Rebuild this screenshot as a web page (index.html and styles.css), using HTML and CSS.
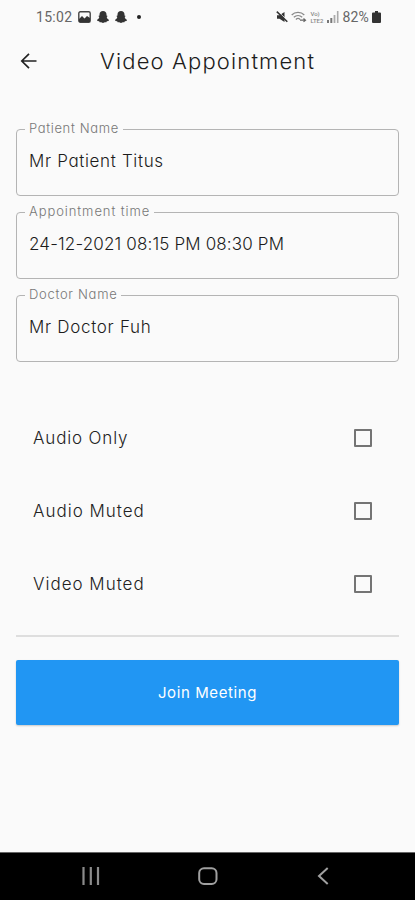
FILE: index.html
```html
<!DOCTYPE html>
<html lang="en">
<head>
<meta charset="utf-8">
<meta name="viewport" content="width=device-width, initial-scale=1">
<title>Video Appointment</title>
<link rel="stylesheet" href="styles.css">
</head>
<body>
<div class="screen">
  <div class="status">
    <div class="status-left">
      <span class="clock">15:02</span>
      <svg class="i-photo" width="13" height="12" viewBox="0 0 13 12"><rect x=".8" y=".8" width="11.4" height="10.4" rx="1.5" fill="#fafafa" stroke="#444" stroke-width="1.4"/><path d="M1 10V8l3-3 2.500 2.500L9 5l3 2v4H1z" fill="#333"/></svg>
      <svg width="12" height="12" viewBox="0 0 12 12"><path id="ghost" d="M6 0C3.800 0 2.500 1.500 2.500 3.400v1.200L1.300 5l1 1.100C2 7.500 1.200 8.300 0 8.900l.5 1.100 1.700.2.400 1h1.600L6 12l1.800-.8h1.600l.4-1 1.700-.2.500-1.100c-1.200-.6-2-1.400-2.300-2.800l1-1.100-1.200-.4V3.400C9.500 1.500 8.200 0 6 0z" fill="#333"/></svg>
      <svg width="12" height="12" viewBox="0 0 12 12"><use href="#ghost"/></svg>
      <span class="dot"></span>
    </div>
    <div class="status-right">
      <svg width="12" height="12" viewBox="0 0 12 12"><path d="M1 4.200h2.500L8.500 1v10L3.500 7.800H1z" fill="#333"/><path d="M1.500 0l10 9.500" stroke="#fafafa" stroke-width="1"/><path d="M.8.600l10.500 10.200" stroke="#333" stroke-width="1.500"/></svg>
      <svg width="16" height="12" viewBox="0 0 16 12" fill="none" stroke="#888" stroke-width="1.200"><path d="M.7 4C4 .5 10 .5 13.300 4M2.800 6.300c2.500-2.300 6-2.300 8.400 0M4.900 8.500c1.300-1.200 3-1.200 4.200 0"/><path d="M9 9.200h5M12.500 7.500l2 1.700-2 1.700" stroke="#666"/></svg>
      <span class="volte"><span>Vo)</span><span>LTE2</span></span>
      <svg width="12" height="12" viewBox="0 0 12 12"><path d="M0 9h2v3H0zM3.300 7h2v5h-2z" fill="#777"/><path d="M6.600 4h1.800v8H6.600zM9.900 0h1.600v12H9.900z" fill="#aaa"/></svg>
      <span class="battery-text">82%</span>
      <svg width="9" height="12" viewBox="0 0 9 12"><path d="M3 0h3v1.500h2q1 0 1 1V11q0 1-1 1H1q-1 0-1-1V2.500q0-1 1-1h2z" fill="#333"/></svg>
    </div>
  </div>
  <header class="bar">
    <svg class="back" width="18" height="18" viewBox="0 0 18 18" fill="none" stroke="#222" stroke-width="1.700"><path d="M16.500 9H2.200M9 1.800L1.800 9 9 16.200"/></svg>
    <h1>Video Appointment</h1>
  </header>
  <main>
    <fieldset><legend class="l1">Patient Name</legend><div class="value v1">Mr Patient Titus</div></fieldset>
    <fieldset><legend class="l2">Appointment time</legend><div class="value v2">24-12-2021 08:15 PM 08:30 PM</div></fieldset>
    <fieldset><legend class="l3">Doctor Name</legend><div class="value v3">Mr Doctor Fuh</div></fieldset>
    <div class="options">
      <label class="option"><span class="o1">Audio Only</span><input type="checkbox"></label>
      <label class="option"><span class="o2">Audio Muted</span><input type="checkbox"></label>
      <label class="option"><span class="o3">Video Muted</span><input type="checkbox"></label>
    </div>
    <div class="divider"></div>
    <button class="join" type="button">Join Meeting</button>
  </main>
  <nav>
    <svg width="18" height="18" viewBox="0 0 18 18"><path d="M1.500 0v18M8.800 0v18M16 0v18" stroke="#8b8b8b" stroke-width="2.200"/></svg>
    <svg class="home" width="20" height="18" viewBox="0 0 20 18"><rect x="1.200" y="1.200" width="17.300" height="15.800" rx="4.800" fill="none" stroke="#a0a0a0" stroke-width="2"/></svg>
    <svg width="12" height="18" viewBox="0 0 12 18"><path d="M10.700 1L2 9l8.700 8" fill="none" stroke="#a0a0a0" stroke-width="2"/></svg>
  </nav>
</div>
</body>
</html>
```
FILE: styles.css
```css
* { box-sizing: border-box; }
body {
  margin: 0;
  background: #fafafa;
  color: #1c1c1c;
  font-family: Inter, "Open Sans", sans-serif;
  font-weight: 300;
  font-feature-settings: "cv11";
}
svg { display: block; flex: none; }
.screen { height: 900px; display: flex; flex-direction: column; }
.status {
  height: 34px;
  padding: 0 34px 0 36px;
  display: flex;
  justify-content: space-between;
  align-items: center;
  font-family: Roboto, sans-serif;
  font-size: 14px;
  font-weight: 400;
  color: #666;
}
.status-left, .status-right { display: flex; align-items: center; }
.status-left { gap: 6px; }
.clock { width: 37px; letter-spacing: .3px; }
.i-photo { margin-left: -1px; }
.dot { width: 4px; height: 4px; margin-left: 4px; border-radius: 50%; background: #222; }
.status-right { gap: 3px; }
.volte { width: 14px; display: flex; flex-direction: column; font-size: 6px; line-height: 7px; font-weight: 500; color: #888; }
.battery-text { letter-spacing: .2px; }
.bar { height: 54px; padding: 0 20px; display: flex; align-items: center; }
.back { margin-right: 62px; }
h1 { margin: 0 0 1px; font-size: 22px; font-weight: 300; line-height: 30px; letter-spacing: 1.150px; white-space: nowrap; }
main { flex: 1; padding: 33px 16px 0; }
fieldset {
  height: 75px;
  margin: 0 0 8px;
  padding: 0 12px;
  border: 1px solid #b4b4b4;
  border-radius: 4px;
  min-width: 0;
}
legend { height: 17px; margin-left: -4px; padding: 0 4px; font-size: 13px; line-height: 15px; color: #777; white-space: nowrap; }
.l1 { letter-spacing: .65px; }
.l2 { letter-spacing: .92px; }
.l3 { letter-spacing: .7px; }
.value { margin-top: 11px; font-size: 17px; line-height: 24px; white-space: nowrap; }
.v1 { letter-spacing: .65px; }
.v2 { letter-spacing: .150px; }
.v3 { letter-spacing: .7px; }
.options { margin-top: 40px; }
.option { height: 72.700px; padding: 0 27px 0 17px; display: flex; align-items: center; justify-content: space-between; font-size: 17px; color: #222; }
.o1 { letter-spacing: .85px; }
.o2, .o3 { letter-spacing: 1px; }
input { appearance: none; width: 18px; height: 18px; margin: 0; border: 2px solid #747474; border-radius: 1px; }
.divider { height: 2px; margin-top: 15px; background: #dedede; }
.join {
  display: block;
  width: 100%;
  height: 65px;
  margin-top: 23px;
  padding: 0;
  border: 0;
  border-radius: 2px;
  background: #2196f3;
  color: #fff;
  font: 400 15px/24px Inter, sans-serif;
  font-feature-settings: "cv11";
  letter-spacing: .6px;
  box-shadow: 0 1px 2px #0003;
}
nav { height: 48px; padding: 0 86px 2px 82px; background: #000; border-top: 1px solid #666; display: flex; align-items: center; justify-content: space-between; }
.home { margin-right: 2px; }
```
